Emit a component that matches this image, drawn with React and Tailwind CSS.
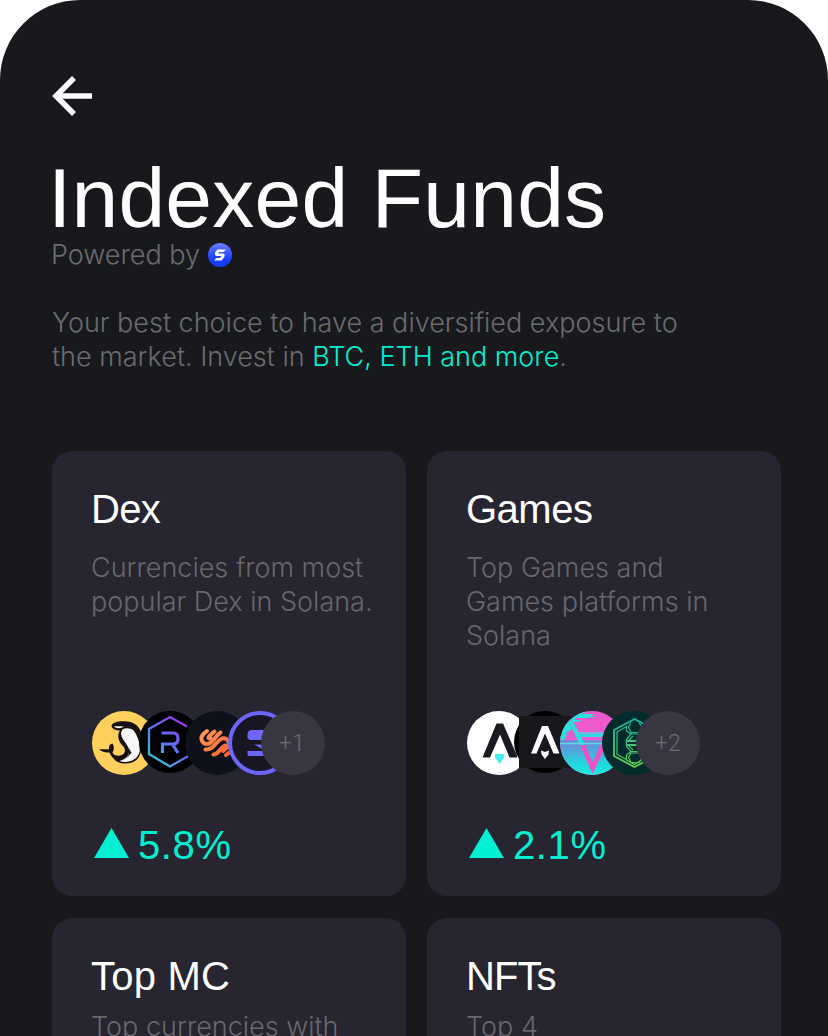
import React from 'react';

const Orca = () => (
  <svg viewBox="0 0 64 64" className="relative h-16 w-16 shrink-0">
    <circle cx="32" cy="32" r="32" fill="#ffd15c" />
    <path d="M19.500 15C20 11 28 9.500 35 10.500C42 11 47 15 49 21V34C50 42 47 49 40 51.500C33 54 25 52 22 48C19.500 46 18 43 17.500 41.500C13 42 9 40.500 7 38C11 39 14 37.500 17 38.500C16.500 35 18 33 20.500 32.500C22.500 36 22 39 20.500 41.500C22 45 27 46 31.500 43C34 40 33 37 30 34C26 30 25 24 28 19.500C24 19.500 20 18 19.500 15Z" fill="#17110f" />
    <path d="M31 18C34 16.500 40 17 42 20C46 26 49 34 47.500 41C45.500 49 36 53 27.500 50C33 48.500 38 45 37 38.500C36 34 30.500 29 29.500 25C28.500 22 29.500 19.500 31 18Z" fill="#f7f7fa" />
    <path d="M22 15.500C24.500 18 29 17.500 32 15.500C29 15.500 24 15 22 15.500Z" fill="#fff" />
    <path d="M36.500 36C38 40 37 44 34.500 47L39.500 42Z" fill="#17110f" />
  </svg>
);

const Raydium = () => (
  <svg viewBox="0 0 62 62" className="relative -ml-[17px] -mt-0.5 h-[62px] w-[62px] shrink-0">
    <defs>
      <linearGradient id="ray" x1="48" y1="12" x2="10" y2="50" gradientUnits="userSpaceOnUse">
        <stop stopColor="#a034ee" /><stop offset=".5" stopColor="#5b70f3" /><stop offset="1" stopColor="#38cad8" />
      </linearGradient>
    </defs>
    <circle cx="31" cy="31" r="31" fill="#000" />
    <path d="M48 15.500L31 6L10 18V43L31 55.500L51 44" fill="none" stroke="url(#ray)" strokeWidth="2.3" />
    <path d="M23.500 42V33H34C37.500 33 39 30.500 39 27.500C39 24.500 37.500 22 34 22H22.500M34 34L39 42" fill="none" stroke="url(#ray)" strokeWidth="3.2" />
  </svg>
);

const Swirl = () => (
  <svg viewBox="0 0 64 64" className="relative -ml-4 h-16 w-16 shrink-0">
    <defs><linearGradient id="swirl" x1="18" y1="18" x2="42" y2="48" gradientUnits="userSpaceOnUse"><stop stopColor="#ff9858" /><stop offset="1" stopColor="#ff612c" /></linearGradient></defs>
    <circle cx="32" cy="32" r="32" fill="#0d1119" />
    <g fill="none" stroke="url(#swirl)" strokeWidth="4" strokeLinecap="round">
      <path d="M22 20L18.500 23C14.500 27 17 33 22 33C28 33 29 26 35.500 21.500" />
      <path d="M29.500 20.500L25 24.500C22.500 27 23.500 28 25.500 27" />
      <path d="M20.500 38.500C29 39 31 30 37 27.500C42 26 46 32 42.500 36L38 40" />
      <path d="M28.500 43.500C34 43.500 35 36.500 40 34.500M41 44L45 41" />
    </g>
  </svg>
);

const Step = () => (
  <svg viewBox="0 0 64 64" className="relative -ml-[21px] h-16 w-16 shrink-0">
    <circle cx="32" cy="32" r="30" fill="#171622" stroke="#6d66fb" strokeWidth="4" />
    <path d="M24 19H44V29H22L19.500 27V23.500C19.500 21 21 19 24 19Z" fill="#6d66fb" />
    <path d="M26 33.500H42V38H34L30 35.500ZM19.500 40H42V45H20.500L19.500 44Z" fill="#6d66fb" />
  </svg>
);

const Atlas = () => (
  <svg viewBox="0 0 64 64" className="relative h-16 w-16 shrink-0">
    <circle cx="32" cy="32" r="32" fill="#fff" />
    <path d="M29.500 12.500H36L50 44.500V46.500H42.500L33 23.500L23 46.500H15.500Z" fill="#1a1b20" />
    <path d="M28 43H37V46.500L32.500 53L28 46.500Z" fill="#43efef" />
  </svg>
);

const Polis = () => (
  <svg viewBox="0 0 62 62" className="relative -ml-[17px] -mt-0.5 h-[62px] w-[62px] shrink-0">
    <circle cx="31" cy="31" r="31" fill="#000" />
    <path d="M5 5H57V57H5Z" fill="#17181c" />
    <path d="M28 15H34L45.500 42.500H39.500L31 22.500L22.500 42.500H17Z" fill="#fff" />
    <path d="M27 39.500L31 41L35 39.500L34.500 43.500L31 48L27.500 43.500Z" fill="#fff" />
  </svg>
);

const Vaporwave = () => (
  <svg viewBox="0 0 64 64" className="relative -ml-4 h-16 w-16 shrink-0">
    <defs>
      <clipPath id="vapor"><circle cx="32" cy="32" r="32" /></clipPath>
      <linearGradient id="vapor-fill" x1="0" y1="0" x2="0" y2="1"><stop stopColor="#6e8bdb" /><stop offset=".65" stopColor="#1ed9dc" /><stop offset="1" stopColor="#20ebdc" /></linearGradient>
    </defs>
    <g clipPath="url(#vapor)">
      <path d="M0 0H64V64H0Z" fill="#ee59cc" />
      <path d="M15 1H26L22 3H34L31 5H37L27 7H16L15 9H23L17 11H12L8 8Z" fill="#27e4dc" />
      <path d="M1 17L8 10L12 18L2 25Z" fill="#27e4dc" />
      <path d="M3 24L12 19L17 30H0Z" fill="#e85bcd" />
      <path d="M0 25L8 22L4 29H0Z" fill="#27e4dc" />
      <path d="M17 21H64V26H20Z" fill="#30d7dc" />
      <path d="M0 29H64V32H0Z" fill="#7588d8" />
      <path d="M0 32H64V64H0Z" fill="url(#vapor-fill)" />
      <path d="M20 34H25L32.500 51L40.500 34H46L32.500 63Z" fill="#f04fc8" />
      <path d="M8 9L14 12L25 34H20Z" fill="#20e4de" />
      <path d="M0 32.500H64" stroke="#58dbe5" strokeWidth="1.5" />
      <path d="M17 22H64" stroke="#8baaf0" strokeWidth="1.500" />
    </g>
  </svg>
);

const HexToken = () => (
  <svg viewBox="0 0 64 64" className="relative -ml-[22px] h-16 w-16 shrink-0">
    <defs><linearGradient id="hex" x1="0" y1="8" x2="0" y2="56" gradientUnits="userSpaceOnUse"><stop stopColor="#17b3a4" /><stop offset="1" stopColor="#60d250" /></linearGradient></defs>
    <circle cx="32" cy="32" r="32" fill="#032b2c" />
    <g fill="none" stroke="url(#hex)" strokeWidth="1.200">
      <path d="M32.500 8L12 19V45L32.500 56L53 45V19Z" strokeWidth="1.800" />
      <path d="M24.500 15.500L15 21V43.500L24.500 48.500" />
      <path d="M24.500 14.500V20L29 23L24.500 28.500V35.500L29 40.500L24.500 44V49L32.500 53.500L40 49V44L36 40.500" />
      <path d="M29 11.500L26.500 16L29 21.500H37L40 16L37 11.500M29 42H37L40 46.500L37 51.500H29L26.500 46.500Z" />
      <path d="M29 23H37M29 40.500H37M31 25L27 29M27 35L31 39" />
      <path d="M25 30H38M25 34H38" strokeWidth="2" />
    </g>
  </svg>
);

function More({ label, games }) {
  return <div className={`relative flex h-16 w-16 shrink-0 items-center justify-center rounded-full bg-[#373641] font-['Roboto'] text-[23px] font-light leading-[26px] text-[#6c6c6e] ${games ? '-ml-[30px]' : '-ml-[31px]'}`}><span className={games ? 'pt-0.5' : '-ml-0.5 pt-0.5'}>{label}</span></div>;
}

function Card({ title, titleClass, children, gain, logos, compact }) {
  return (
    <section className="h-[445px] rounded-[20px] bg-[#262530] pl-10 pt-[35px]">
      <h2 className={`h-[46px] whitespace-nowrap font-['Liberation_Sans'] text-[40px] leading-[46px] text-white ${titleClass}`}>{title}</h2>
      <p className={`-ml-px h-[102px] whitespace-nowrap font-['Inter'] text-[27px] font-light leading-[34px] text-[#68676c] ${compact ? 'mt-[11px]' : 'mt-[19px]'}`}>{children}</p>
      <div className="mt-[58px] flex h-16 items-center">{logos}</div>
      {gain && <div className="mt-[46px] flex h-[46px] items-center gap-[9px] font-['Liberation_Sans'] text-[40px] leading-[46px] tracking-[0.6px] text-[#00f0d1]">
        <svg viewBox="0 0 37 32" className="-mt-0.5 h-8 w-[37px]"><path d="M19.500 1L37 31H2Z" fill="currentColor" /></svg>
        <span className="pt-px">{gain}</span>
      </div>}
    </section>
  );
}

export default function App() {
  return (
    <div className="h-[1036px] w-[828px] overflow-hidden bg-white">
      <main className="h-full rounded-t-[80px] bg-[#18191d] px-[52px] pt-[76px]">
        <button aria-label="Back" className="block h-10 w-10 text-white">
          <svg viewBox="0 0 40 40" className="h-10 w-10" fill="none" stroke="currentColor" strokeWidth="5.500"><path d="M22 2L4 20L22 38M3 20H40" /></svg>
        </button>
        <h1 className="-ml-1 mt-10 h-[82px] whitespace-nowrap font-['Liberation_Sans'] text-[84px] leading-[84px] tracking-[0.2px] text-white">Indexed Funds</h1>
        <div className="-ml-px flex h-[34px] items-center gap-2 font-['Inter'] text-[27px] font-light leading-[34px] text-[#6b6b6f]">
          <span>Powered by</span>
          <svg viewBox="0 0 24 24" className="h-6 w-6"><defs><linearGradient id="brand" x1="0" y1="0" x2="0" y2="1"><stop stopColor="#6b7cff" /><stop offset=".7" stopColor="#173cff" /></linearGradient></defs><circle cx="12" cy="12" r="12" fill="url(#brand)" /><path d="M9.500 6.500H18L15.500 9H11L10 10.500H15C17 10.500 17 13 16 14.500L13.500 17.500H6L8.500 15H12L13.500 13H9C6.500 13 6.500 10.500 8 8Z" fill="#fff" /></svg>
        </div>
        <p className="mt-[34px] h-[68px] whitespace-nowrap font-['Inter'] text-[27px] font-light leading-[34px] text-[#6b6b6f]">Your best choice to have a diversified exposure to<br />the market. Invest in <span className="text-[#00f0d1]">BTC, ETH and more</span>.</p>
        <div className="mt-[77px] grid grid-cols-[354px_354px] gap-x-[21px] gap-y-[22px]">
          <Card title="Dex" titleClass="-ml-px tracking-[-0.7px]" gain="5.8%" logos={<><Orca /><Raydium /><Swirl /><Step /><More label="+1" /></>}>Currencies from most<br />popular Dex in Solana.</Card>
          <Card title="Games" titleClass="-ml-px tracking-[-0.5px]" gain="2.1%" logos={<><Atlas /><Polis /><Vaporwave /><HexToken /><More label="+2" games /></>}>Top Games and<br />Games platforms in<br />Solana</Card>
          <Card title="Top MC" titleClass="-ml-px tracking-[0.2px]" compact>Top currencies with</Card>
          <Card title="NFTs" titleClass="-ml-px tracking-[-0.9px]" compact>Top 4</Card>
        </div>
      </main>
    </div>
  );
}
